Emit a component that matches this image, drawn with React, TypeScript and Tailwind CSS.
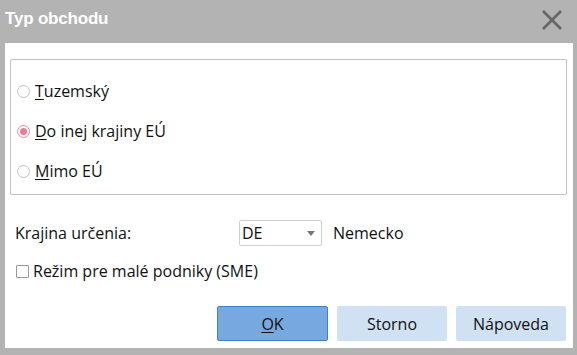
import React, { useState } from "react";

const FONT = { fontFamily: '"Open Sans", "Liberation Sans", Arial, sans-serif' };

type Choice = "tuzemsky" | "eu" | "mimo";

function Radio({ checked }: { checked: boolean }) {
  return (
    <span
      className={`flex h-[13px] w-[13px] shrink-0 items-center justify-center rounded-full border bg-white ${
        checked ? "border-[#f08ca0]" : "border-[#c4c4c4]"
      }`}
    >
      {checked && <span className="h-[7px] w-[7px] rounded-full bg-[#ef7a92]" />}
    </span>
  );
}

export default function App() {
  const [choice, setChoice] = useState<Choice>("eu");
  const [sme, setSme] = useState(false);

  const options: { id: Choice; key: string; rest: string }[] = [
    { id: "tuzemsky", key: "T", rest: "uzemský" },
    { id: "eu", key: "D", rest: "o inej krajiny EÚ" },
    { id: "mimo", key: "M", rest: "imo EÚ" },
  ];

  return (
    <div
      className="flex h-[355px] w-[577px] flex-col bg-[#b3b3b3] text-[16px] text-[#111]"
      style={FONT}
    >
      {/* Title bar */}
      <div className="flex h-[43px] items-center justify-between pl-[5px] pr-[14px]">
        <span
          className="mt-[-6px] text-[17px] font-bold tracking-[-0.2px] text-white"
          style={{ fontFamily: '"Liberation Sans", Arial, sans-serif' }}
        >
          Typ obchodu
        </span>
        <svg width="22" height="22" viewBox="0 0 22 22" className="mt-[-4px]">
          <path d="M2 2 L20 20 M20 2 L2 20" stroke="#666" strokeWidth="2.6" />
        </svg>
      </div>

      {/* Body */}
      <div className="ml-[5px] mr-[4px] flex h-[305px] flex-col bg-white">
        <div className="ml-[5px] mr-[6px] mt-[16px] flex h-[136px] flex-col rounded-[2px] border border-[#c0c0c0] pt-[20px]">
          {options.map((o) => (
            <button
              key={o.id}
              onClick={() => setChoice(o.id)}
              className="flex h-[22px] items-center gap-[5px] pl-[6px] text-left [&:not(:last-child)]:mb-[18px]"
            >
              <Radio checked={choice === o.id} />
              <span>
                <span className="underline underline-offset-2">{o.key}</span>
                {o.rest}
              </span>
            </button>
          ))}
        </div>

        <div className="mt-[25px] flex h-[26px] items-center pl-[10px]">
          <span className="w-[224px]">Krajina určenia:</span>
          <div className="flex h-[26px] w-[83px] items-center justify-between rounded-[2px] border border-[#cfcfcf] pl-[2px] pr-[6px]">
            <span>DE</span>
            <svg width="8" height="5" viewBox="0 0 8 5">
              <path d="M0 0 H8 L4 5 Z" fill="#777" />
            </svg>
          </div>
          <span className="ml-[11px]">Nemecko</span>
        </div>

        <button
          onClick={() => setSme(!sme)}
          className="mt-[13px] flex h-[24px] items-center gap-[4px] pl-[11px] text-left"
        >
          <span className="flex h-[13px] w-[13px] items-center justify-center rounded-[1px] border border-[#9a9a9a] bg-white text-[10px] leading-none">
            {sme ? "✓" : ""}
          </span>
          <span>Režim pre malé podniky (SME)</span>
        </button>

        <div className="mt-[23px] flex gap-[9px] pl-[212px]">
          <button className="h-[35px] w-[111px] rounded-[2px] border border-[#3f80c8] bg-[#77a9e0]">
            <span className="underline underline-offset-2">O</span>K
          </button>
          <button className="h-[35px] w-[110px] rounded-[2px] bg-[#d0e1f3]">Storno</button>
          <button className="h-[35px] w-[110px] rounded-[2px] bg-[#d0e1f3]">Nápoveda</button>
        </div>
      </div>
    </div>
  );
}
